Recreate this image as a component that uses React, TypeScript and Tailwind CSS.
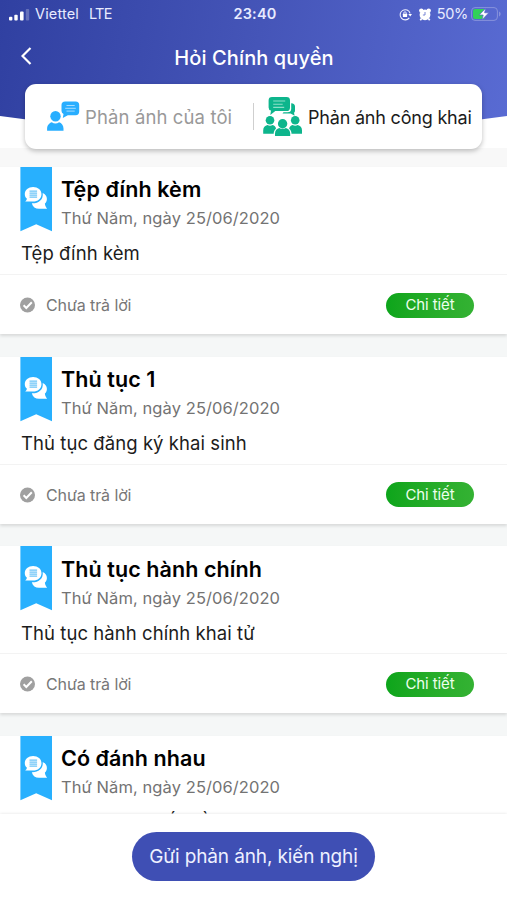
import React from "react";

type Post = { title: string; date: string; body: string; collapsed?: boolean };

const posts: Post[] = [
  { title: "Tệp đính kèm", date: "Thứ Năm, ngày 25/06/2020", body: "Tệp đính kèm" },
  { title: "Thủ tục 1", date: "Thứ Năm, ngày 25/06/2020", body: "Thủ tục đăng ký khai sinh" },
  { title: "Thủ tục hành chính", date: "Thứ Năm, ngày 25/06/2020", body: "Thủ tục hành chính khai tử" },
  { title: "Có đánh nhau", date: "Thứ Năm, ngày 25/06/2020", body: "Có đánh nhau mất gần", collapsed: true },
];

function SignalIcon() {
  return (
    <svg width="21" height="13" viewBox="0 0 21 13" fill="white">
      <rect x="0" y="8.700" width="3.400" height="3.800" rx="1" />
      <rect x="5.300" y="6.800" width="3.400" height="5.700" rx="1" />
      <rect x="11" y="3.500" width="3.600" height="9" rx="1" />
      <rect x="16.800" y="1" width="3.400" height="11.500" rx="1" opacity=".25" />
    </svg>
  );
}

function LockRotationIcon() {
  return (
    <svg width="13" height="13" viewBox="0 0 13 13" fill="none" stroke="#eef0ff">
      <path d="M10.300 9.900A5.100 5.100 0 1 1 11.100 5.300" strokeWidth="1.100" />
      <path d="M9.300 6h3.700l-1.800 2.400z" fill="white" stroke="none" />
      <rect x="3.900" y="5.800" width="4.200" height="3.300" rx=".5" fill="white" stroke="none" />
      <path d="M4.800 6V5a1.200 1.200 0 0 1 2.400 0v1" strokeWidth=".9" />
    </svg>
  );
}

function AlarmIcon() {
  return (
    <svg width="12" height="13" viewBox="0 0 12 13">
      <circle cx="2.300" cy="2.600" r="2.200" fill="white" />
      <circle cx="9.700" cy="2.600" r="2.200" fill="white" />
      <circle cx="6" cy="6.800" r="5.400" fill="white" />
      <path d="M2.600 10.500 1.300 12.300M9.400 10.500l1.300 1.800" stroke="white" strokeWidth="1.700" />
      <path d="M6 4v3H3.900" stroke="#6a78d0" fill="none" strokeWidth=".9" />
    </svg>
  );
}

function BatteryIcon() {
  return (
    <svg width="30" height="14" viewBox="0 0 30 14">
      <rect x=".6" y=".6" width="25.800" height="12.800" rx="3.400" fill="none" stroke="#8792dc" strokeWidth="1" />
      <path d="M28 4.600c2.200 1 2.200 3.800 0 4.800z" fill="#8792dc" />
      <path d="M4 2h9.500v10H4q-2 0-2-2V4q0-2 2-2z" fill="#31d158" />
      <path d="M14.700 1.300 8.200 8h4L11.100 12.700l6.700-6.900h-4.200z" fill="white" stroke="#5665c9" strokeWidth=".7" />
    </svg>
  );
}

function PersonIcon() {
  return (
    <svg width="33" height="31" viewBox="0 0 33 31" fill="#28aeff">
      <circle cx="8.500" cy="15.200" r="5.200" />
      <path d="M.1 29.800v-2.200c0-3.400 2.300-5.800 4.700-6.400 2.300 1.600 5 1.600 7.300 0 2.400.6 4.400 3 4.400 6.400v2.200z" />
      <path d="M18.200.4h10.400q3.600 0 3.600 3.600v6.600q0 3.600-3.600 3.600h-7.800L15.800 17l.7-3.900q-2-1-2-3V4Q14.500.4 18.200.4z" />
      <path d="M19.500 4.500h8.200M18.200 7.300h10.600M19.500 10.100h8.200" stroke="#a5dcff" strokeWidth="1" />
    </svg>
  );
}

function CrowdIcon() {
  return (
    <svg width="40" height="41" viewBox="0 0 40 41" fill="#0db58c">
      <path d="M28.200 7.200Q32 7.400 32 10.500v3.900q0 1.700-1 2.300l.6 3-4-2.200H19.500l1-1.200h4q3.700 0 3.700-3.500z" />
      <path d="M9 1h14.500Q27 1 27 4.400v7Q27 15 23.500 15H12.300l-5 4.100.7-4.500q-2.400-.6-2.400-3.200v-7Q5.600 1 9 1z" />
      <path d="M10.200 5h12M10.200 8.200h9.500M10.200 11.400h11" stroke="#8edfc8" strokeWidth="1.100" />
      <circle cx="7" cy="24.200" r="4.300" />
      <circle cx="32.200" cy="24.200" r="4.300" />
      <path d="M.2 37.700v-3.500c0-3.100 1.800-4.700 4.200-5.300q2.600 1.500 5.200 0c2 .6 3.400 2 3.400 3.800-1.600 1.200-2.300 3-2.300 5z" />
      <path d="M39 37.700v-3.500c0-3.100-1.800-4.700-4.200-5.300q-2.600 1.500-5.200 0c-2 .6-3.400 2-3.400 3.800 1.600 1.200 2.300 3 2.300 5z" />
      <circle cx="19.600" cy="27.700" r="4.700" />
      <path d="M12 40v-2.500c0-3.100 1.900-5 4.300-5.600q3.300 1.800 6.600 0c2.400.6 4.300 2.500 4.300 5.600V40z" />
    </svg>
  );
}

function Ribbon() {
  return (
    <svg className="shrink-0" width="32" height="65" viewBox="0 0 32 65">
      <path d="M.4 0H32v64.300L16.200 57.300.4 64.300z" fill="#28b0fe" />
      <path
        d="M13.100 20c4.700 0 8.400 3.100 8.400 7.200s-3.700 7.400-8.400 7.400H5.200c1.200-.9 1.700-1.900 1.600-3-1.300-1.200-2-2.700-2-4.400 0-4.100 3.600-7.200 8.300-7.200z"
        fill="white"
      />
      <path
        d="M22.700 25.900c2.700 1.200 4.200 3.300 4.200 6 0 1.900-.7 3.500-2 4.700.1 2.200 1 3.700 2.200 5.200H19c-3.600 0-6.200-2-7.200-5.600 6.800.3 11.700-3.500 10.900-10.300z"
        fill="white"
      />
      <path d="M9.500 24.100h7.600M9.500 26.100h7.600M9.500 28.100h7.600M9.500 30.100h7.600" stroke="#6bc4f7" strokeWidth="1.100" />
    </svg>
  );
}

function PostCard({ post }: { post: Post }) {
  return (
    <article className="mb-[22.900px] flex h-[166.800px] shrink-0 flex-col bg-white shadow-[0_2px_3px_rgba(0,0,0,0.12)]">
      <div className="flex h-[108px] shrink-0 flex-col border-b border-[#f3f3f3] px-5">
        <div className="flex h-[65px] gap-[9px]">
          <Ribbon />
          <div className="flex flex-col pt-[8.300px] whitespace-nowrap">
            <h2 className="text-[21.500px] leading-[29px] font-semibold tracking-[0.080px] text-black">{post.title}</h2>
            <p className="text-[16.500px] leading-[28px] tracking-[0.080px] text-[#737373]">{post.date}</p>
          </div>
        </div>
        <p className="mt-[8.200px] ml-px text-[18.500px] leading-[26px] tracking-[0.070px] whitespace-nowrap text-[#1c1c1c]">{post.body}</p>
      </div>
      {!post.collapsed && (
        <div className="flex flex-1 items-center justify-between pt-[1.200px] pr-[33px] pl-5">
          <div className="flex items-center gap-[11px] text-[16px] tracking-[-0.100px] text-[#777]">
            <svg width="15" height="16" viewBox="0 0 15 16">
              <circle cx="7.500" cy="8" r="7.500" fill="#a0a0a0" />
              <path d="m3.600 8.300 2.700 2.700 5.500-5.700" fill="none" stroke="white" strokeWidth="2" />
            </svg>
            Chưa trả lời
          </div>
          <button className="h-[25px] w-[88px] rounded-full bg-linear-to-r from-[#0ca51b] to-[#34b233] text-[15px] leading-[24px] tracking-[-0.100px] text-[#edffed]">
            Chi tiết
          </button>
        </div>
      )}
    </article>
  );
}

export default function App() {
  return (
    <main className="relative flex h-[900px] w-[507px] flex-col overflow-hidden bg-white font-[Inter,'Liberation_Sans',sans-serif]">
      <div className="absolute inset-x-0 top-0 h-[140px] bg-linear-[100deg] from-[#3040a1] via-[#4555b8] to-[#596bd3] [clip-path:circle(1800px_at_50%_-1666px)]" />
      <header className="relative flex h-[148px] shrink-0 flex-col text-white">
        <div className="grid h-[28px] shrink-0 grid-cols-[1fr_auto_1fr] items-center pr-[6px] pl-[9px] text-[14.500px] text-[#e8ebff]">
          <div className="flex items-center">
            <SignalIcon />
            <span className="ml-[5px] tracking-[0.150px]">Viettel</span>
            <span className="ml-[10px] tracking-[-0.700px]">LTE</span>
          </div>
          <span className="font-semibold tracking-[0.200px]">23:40</span>
          <div className="flex items-center justify-end">
            <LockRotationIcon />
            <span className="ml-[7px]"><AlarmIcon /></span>
            <span className="mr-[3px] ml-[6px] tracking-[-0.300px]">50%</span>
            <BatteryIcon />
          </div>
        </div>
        <div className="grid h-[56px] shrink-0 grid-cols-[40px_1fr_40px] items-center">
          <button aria-label="Quay lại" className="pl-[21px]">
            <svg width="11" height="18" viewBox="0 0 11 18" fill="none" stroke="white" strokeWidth="2.200">
              <path d="M9.500 1 1.500 9l8 8" />
            </svg>
          </button>
          <h1 className="pt-[4px] pl-px text-center text-[20px] font-medium tracking-[0.100px]">Hỏi Chính quyền</h1>
        </div>
        <nav className="mx-[25px] flex h-[65px] shrink-0 items-center rounded-[11px] bg-white pl-[22px] text-[18.500px] whitespace-nowrap shadow-[0_2px_5px_rgba(0,0,0,0.25)]">
          <PersonIcon />
          <span className="ml-[5px] w-[149px] pt-[2px] tracking-[0.120px] text-[#999]">Phản ánh của tôi</span>
          <span className="ml-[19px] h-[27px] w-px bg-[#cfcfcf]" />
          <span className="ml-[9px]"><CrowdIcon /></span>
          <span className="ml-[5px] pt-[2px] text-[18px] tracking-[-0.200px] text-[#1b1b1b]">Phản ánh công khai</span>
        </nav>
      </header>
      <section className="flex min-h-0 flex-1 flex-col overflow-hidden bg-[#f5f7f7]">
        <div className="h-[19.100px] shrink-0 bg-[#f8f8f8]" />
        {posts.map((post) => <PostCard key={post.title} post={post} />)}
      </section>
      <footer className="relative flex h-[86px] shrink-0 justify-center bg-white pt-[18px] shadow-[0_0_3px_rgba(0,0,0,0.12)]">
        <button className="h-[49px] w-[243px] rounded-full bg-[#3f4fb4] pt-[2px] text-[19px] tracking-[-0.130px] whitespace-nowrap text-[#eef1ff]">Gửi phản ánh, kiến nghị</button>
      </footer>
    </main>
  );
}
